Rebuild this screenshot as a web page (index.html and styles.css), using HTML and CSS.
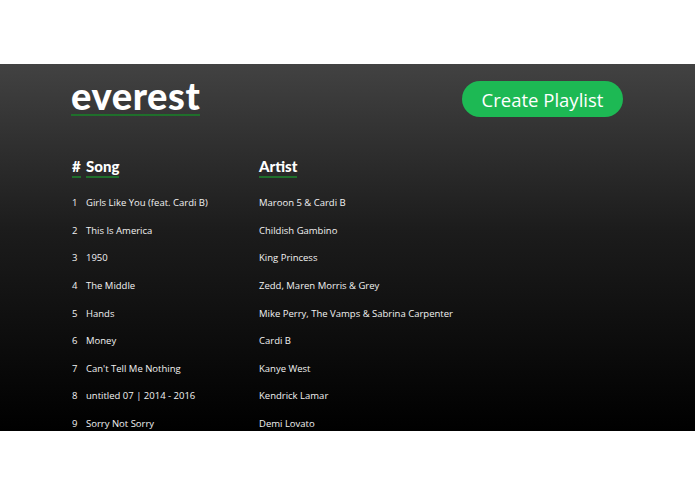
FILE: index.html
```html
<!DOCTYPE html>
<html>
<head>
<meta charset="utf-8">
<link rel="stylesheet" href="styles.css">
</head>
<body>
<div class="spacer"></div>
<main class="panel">
  <header class="top">
    <h1 class="logo">everest</h1>
    <button class="create">Create Playlist</button>
  </header>
  <div class="table">
    <div class="row head">
      <span class="num"><u>#</u></span>
      <span class="song"><u>Song</u></span>
      <span class="artist"><u>Artist</u></span>
    </div>
    <div class="row"><span class="num">1</span><span class="song">Girls Like You (feat. Cardi B)</span><span class="artist">Maroon 5 &amp; Cardi B</span></div>
    <div class="row"><span class="num">2</span><span class="song">This Is America</span><span class="artist">Childish Gambino</span></div>
    <div class="row"><span class="num">3</span><span class="song">1950</span><span class="artist">King Princess</span></div>
    <div class="row"><span class="num">4</span><span class="song">The Middle</span><span class="artist">Zedd, Maren Morris &amp; Grey</span></div>
    <div class="row"><span class="num">5</span><span class="song">Hands</span><span class="artist">Mike Perry, The Vamps &amp; Sabrina Carpenter</span></div>
    <div class="row"><span class="num">6</span><span class="song">Money</span><span class="artist">Cardi B</span></div>
    <div class="row"><span class="num">7</span><span class="song">Can't Tell Me Nothing</span><span class="artist">Kanye West</span></div>
    <div class="row"><span class="num">8</span><span class="song">untitled 07 | 2014 - 2016</span><span class="artist">Kendrick Lamar</span></div>
    <div class="row"><span class="num">9</span><span class="song">Sorry Not Sorry</span><span class="artist">Demi Lovato</span></div>
  </div>
</main>
</body>
</html>
```

FILE: styles.css
```css
html, body {
  margin: 0;
  padding: 0;
  background: #ffffff;
}
.spacer {
  height: 64px;
}
.panel {
  height: 367px;
  overflow: hidden;
  box-sizing: border-box;
  padding: 0 72px 0 71px;
  background: linear-gradient(to bottom, #424242 0%, #1c1c1c 45%, #000000 100%);
  color: #ffffff;
  font-family: "Open Sans", "Liberation Sans", sans-serif;
}
.top {
  display: flex;
  justify-content: space-between;
  align-items: flex-start;
  padding-top: 12px;
}
.logo {
  margin: 0;
  font-family: "Lato", sans-serif;
  font-weight: 900;
  font-size: 38px;
  line-height: 38px;
  letter-spacing: 0.6px;
  border-bottom: 2px solid #1f6f2b;
}
.create {
  margin-top: 5px;
  height: 36px;
  width: 161px;
  border: none;
  border-radius: 18px;
  background: #1db954;
  color: #ffffff;
  font-family: "Open Sans", sans-serif;
  font-size: 18.5px;
  padding: 0;
}
.table {
  margin-top: 37px;
}
.row {
  display: grid;
  grid-template-columns: 15px 173px 1fr;
  height: 27.6px;
  align-items: center;
  font-size: 9.5px;
  color: #f2f2f2;
}
.row.head {
  height: 24px;
  margin-bottom: 11px;
  font-family: "Lato", sans-serif;
  font-weight: 900;
  font-size: 15px;
  color: #ffffff;
}
.row.head u {
  text-decoration: none;
  border-bottom: 2px solid #1f6f2b;
  padding-bottom: 1px;
}
.num {
  padding-left: 1px;
}
```
